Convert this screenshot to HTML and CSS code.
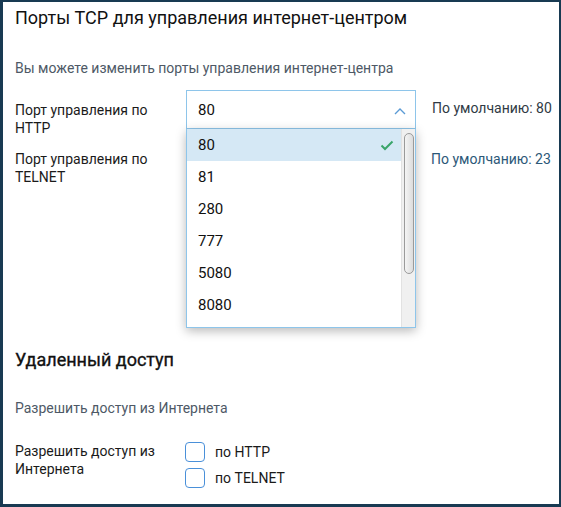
FILE: index.html
```html
<!DOCTYPE html>
<html lang="ru">
<head>
<meta charset="utf-8">
<link rel="stylesheet" href="styles.css">
</head>
<body>
<div class="panel">
  <h1 class="title">Порты TCP для управления интернет-центром</h1>
  <p class="desc">Вы можете изменить порты управления интернет-центра</p>

  <div class="rows">
    <div class="label">Порт управления по HTTP</div>
    <div class="field">
      <div class="select open">
        <span class="value">80</span>
        <svg class="chev" width="12" height="8" viewBox="0 0 12 8"><path d="M1 7 L6 2 L11 7" fill="none" stroke="#5b9bd5" stroke-width="1.4"/></svg>
      </div>
      <div class="dropdown">
        <ul class="options">
          <li class="opt selected">80
            <svg class="check" width="14" height="11" viewBox="0 0 14 11"><path d="M1.5 5.5 L5 9 L12.5 1.5" fill="none" stroke="#3aa56a" stroke-width="2"/></svg>
          </li>
          <li class="opt">81</li>
          <li class="opt">280</li>
          <li class="opt">777</li>
          <li class="opt">5080</li>
          <li class="opt">8080</li>
        </ul>
        <div class="scrollbar"><div class="thumb"></div></div>
      </div>
    </div>
    <div class="default">По умолчанию: 80</div>

    <div class="label">Порт управления по TELNET</div>
    <div class="field">
      <div class="select"></div>
    </div>
    <div class="default link">По умолчанию: 23</div>
  </div>

  <h2 class="title section">Удаленный доступ</h2>
  <p class="desc desc2">Разрешить доступ из Интернета</p>

  <div class="rows rows2">
    <div class="label">Разрешить доступ из Интернета</div>
    <div class="checks">
      <label class="check-row"><span class="box"></span><span>по HTTP</span></label>
      <label class="check-row"><span class="box"></span><span>по TELNET</span></label>
    </div>
  </div>
</div>
</body>
</html>
```

FILE: styles.css
```css
html, body {
  margin: 0;
  padding: 0;
}
body {
  background: #183a52;
  font-family: Roboto, "Liberation Sans", Arial, sans-serif;
  color: #1a1a1a;
  width: 561px;
  height: 507px;
  overflow: hidden;
}
.panel {
  margin: 2px 2px 3px 3px;
  height: 502px;
  background: #fff;
  padding: 4px 8px 0 12px;
  box-sizing: border-box;
}
.title {
  margin: 0;
  font-size: 18px;
  line-height: 24px;
  font-weight: 400;
  color: #111;
}
.desc {
  margin: 28px 0 0 0;
  font-size: 14px;
  line-height: 20px;
  color: #4e5966;
}
.rows {
  margin-top: 12px;
  display: grid;
  grid-template-columns: 171px 230px auto;
  row-gap: 2px;
  align-items: start;
}
.label {
  font-size: 14px;
  line-height: 18px;
  padding-top: 11px;
  max-width: 150px;
  color: #1a1a1a;
}
.field {
  position: relative;
}
.select {
  height: 39px;
  border: 1px solid #8ec5ea;
  box-sizing: border-box;
  display: flex;
  align-items: center;
  justify-content: space-between;
  padding: 0 9px 0 11px;
  font-size: 15px;
  color: #111;
}
.chev {
  display: block;
  margin-top: 2px;
}
.dropdown {
  position: absolute;
  left: 0;
  top: 39px;
  width: 230px;
  height: 199px;
  background: #fff;
  border: 1px solid #8ec5ea;
  border-top: none;
  box-sizing: border-box;
  box-shadow: 0 3px 10px rgba(0, 0, 0, 0.28);
  z-index: 5;
  overflow: hidden;
  display: flex;
}
.options {
  list-style: none;
  margin: 0;
  padding: 0;
  flex: 1;
}
.opt {
  height: 32px;
  display: flex;
  align-items: center;
  justify-content: space-between;
  padding: 0 7px 0 11px;
  font-size: 15px;
  color: #111;
}
.opt.selected {
  background: #d5e8f5;
}
.check {
  display: block;
}
.scrollbar {
  width: 14px;
  background: #f0f0f0;
  border-left: 1px solid #e2e2e2;
  box-sizing: border-box;
  padding: 4px 1px 0 2px;
}
.thumb {
  height: 141px;
  border: 1px solid #9a9a9a;
  border-radius: 6px;
  background: linear-gradient(to right, #f4f4f4, #dcdcdc);
  box-sizing: border-box;
}
.default {
  font-size: 14px;
  line-height: 18px;
  padding-top: 9px;
  padding-left: 16px;
  color: #2f3a44;
  white-space: nowrap;
}
.default.link {
  padding-top: 11px;
  padding-left: 15px;
  color: #2c5878;
}
.section {
  margin-top: 162px;
  font-weight: 400;
  -webkit-text-stroke: 0.35px #111;
}
.desc2 {
  margin-top: 26px;
}
.rows2 {
  margin-top: 24px;
}
.rows2 .label {
  padding-top: 0;
}
.checks {
  display: flex;
  flex-direction: column;
  gap: 6px;
}
.check-row {
  display: flex;
  align-items: center;
  gap: 10px;
  font-size: 14px;
  line-height: 20px;
  color: #1a1a1a;
}
.box {
  width: 20px;
  height: 20px;
  border: 1.5px solid #4a90d9;
  border-radius: 4px;
  box-sizing: border-box;
  margin-left: -1px;
}
```
